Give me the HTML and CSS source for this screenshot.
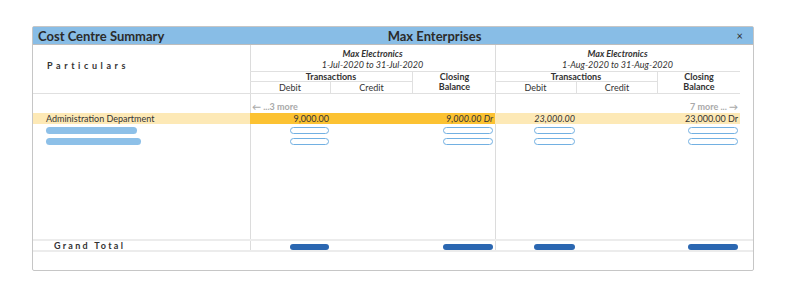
FILE: index.html
```html
<!DOCTYPE html>
<html>
  <head>
    <title>Cost Centre Summary</title>
    <link rel="stylesheet" href="styles.css">
  </head>
  <body>
    <div class="window">
      <div class="titlebar">
        <span class="title-left">Cost Centre Summary</span>
        <span class="title-center">Max Enterprises</span>
        <span class="close">×</span>
      </div>

      <div class="table">
        <div class="head">
          <div class="particulars">Particulars</div>

          <div class="company g1">
            <b>Max Electronics</b>
            <span>1-Jul-2020 to 31-Jul-2020</span>
          </div>
          <div class="trans t1">Transactions</div>
          <div class="closing k1">Closing<br>Balance</div>
          <div class="sub s1 debit">Debit</div>
          <div class="sub s2">Credit</div>

          <div class="company g2">
            <b>Max Electronics</b>
            <span>1-Aug-2020 to 31-Aug-2020</span>
          </div>
          <div class="trans t2">Transactions</div>
          <div class="closing k2">Closing<br>Balance</div>
          <div class="sub s3 debit">Debit</div>
          <div class="sub s4">Credit</div>
        </div>

        <div class="row more-row">
          <div></div>
          <div class="more span3">← ...3 more</div>
          <div class="more span3 right">7 more ... →</div>
        </div>

        <div class="row selected">
          <div class="name">Administration Department</div>
          <div class="focus span3">
            <div class="num">9,000.00</div>
            <div class="num"></div>
            <div class="num italic">9,000.00 Dr</div>
          </div>
          <div class="num italic">23,000.00</div>
          <div class="num"></div>
          <div class="num">23,000.00 Dr</div>
        </div>

        <div class="row pill-row">
          <div class="name"><i class="bar" style="width: 91px"></i></div>
          <div class="num"><i class="ghost" style="width: 39px"></i></div>
          <div class="num"></div>
          <div class="num"><i class="ghost"></i></div>
          <div class="num"><i class="ghost" style="width: 41px"></i></div>
          <div class="num"></div>
          <div class="num"><i class="ghost"></i></div>
        </div>

        <div class="row pill-row">
          <div class="name"><i class="bar" style="width: 95px"></i></div>
          <div class="num"><i class="ghost" style="width: 39px"></i></div>
          <div class="num"></div>
          <div class="num"><i class="ghost"></i></div>
          <div class="num"><i class="ghost" style="width: 41px"></i></div>
          <div class="num"></div>
          <div class="num"><i class="ghost"></i></div>
        </div>

        <div class="filler"></div>

        <div class="row total">
          <div class="total-label">Grand Total</div>
          <div class="num"><i class="solid" style="width: 39px"></i></div>
          <div class="num"></div>
          <div class="num"><i class="solid"></i></div>
          <div class="num"><i class="solid" style="width: 41px"></i></div>
          <div class="num"></div>
          <div class="num"><i class="solid"></i></div>
        </div>
      </div>
    </div>
  </body>
</html>
```

FILE: styles.css
```css
* {
  box-sizing: border-box;
  margin: 0;
  padding: 0;
}

body {
  background: #fff;
  font-family: "Lato", "Noto Sans", sans-serif;
  font-size: 9px;
  color: #333;
  padding: 26px 0 0 32px;
}

.window {
  width: 722px;
  height: 245px;
  border: 1px solid #c6c6c6;
  border-radius: 2px;
  display: flex;
  flex-direction: column;
}

.titlebar {
  height: 18px;
  background: #88bde6;
  border-bottom: 1px solid #bdbdbd;
  display: grid;
  grid-template-columns: 1fr auto 1fr;
  align-items: center;
  padding: 0 10px 0 5px;
  font-weight: bold;
  color: #2b2b2b;
}

.title-left,
.title-center {
  font-size: 13px;
}

.title-center {
  margin-left: 88px;
}

.close {
  justify-self: end;
  font-size: 11px;
  font-weight: normal;
}

.table {
  flex: 1;
  display: flex;
  flex-direction: column;
  background-image: linear-gradient(#dcdcdc, #dcdcdc), linear-gradient(#dcdcdc, #dcdcdc);
  background-size: 1px 206px;
  background-position: 217px 0, 462px 0;
  background-repeat: no-repeat;
}

.head,
.row {
  display: grid;
  grid-template-columns: 217px 81px 82px 82px 82px 81px 82px;
}

.head {
  grid-template-rows: 27px 10px 11px;
  border-bottom: 1px solid #e0e0e0;
  margin-right: 13px;
}

.particulars {
  grid-row: 1 / 4;
  padding: 15px 0 0 14px;
  font-weight: bold;
  letter-spacing: 3.6px;
}

.company {
  grid-row: 1;
  display: flex;
  flex-direction: column;
  align-items: center;
  justify-content: flex-end;
  padding-bottom: 1px;
  border-bottom: 1px solid #e0e0e0;
  font-style: italic;
  line-height: 11px;
}

.g1 { grid-column: 2 / 5; }
.g2 { grid-column: 5 / 8; }

.trans {
  grid-row: 2;
  text-align: center;
  font-weight: bold;
  border-bottom: 1px solid #e0e0e0;
  line-height: 9px;
}

.t1 { grid-column: 2 / 4; border-right: 1px solid #e0e0e0; }
.t2 { grid-column: 5 / 7; border-right: 1px solid #e0e0e0; }

.closing {
  grid-row: 2 / 4;
  text-align: center;
  font-weight: bold;
  line-height: 10px;
}

.k1 { grid-column: 4; margin-left: 1px; }
.k2 { grid-column: 7; }

.sub {
  grid-row: 3;
  text-align: center;
  line-height: 11px;
}

.s1 { grid-column: 2; border-right: 1px solid #e0e0e0; }
.s2 { grid-column: 3; border-right: 1px solid #e0e0e0; }
.s3 { grid-column: 5; border-right: 1px solid #e0e0e0; }
.s4 { grid-column: 6; border-right: 1px solid #e0e0e0; }

.span3 {
  grid-column: span 3;
}

.more-row {
  height: 19px;
  margin-right: 13px;
  align-items: end;
}

.more {
  color: #a9a9a9;
  font-weight: bold;
  padding: 0 2px 1px 2px;
}

.right {
  text-align: right;
}

.row {
  line-height: 11px;
}

.selected {
  background: #fde9b6;
  margin-right: 13px;
}

.focus {
  background: #fcc232;
  display: grid;
  grid-template-columns: 81px 82px 82px;
}

.name {
  padding-left: 13px;
}

.num {
  text-align: right;
  padding-right: 2px;
}

.italic {
  font-style: italic;
}

.pill-row {
  height: 11px;
  margin-right: 13px;
}

.pill-row + .pill-row {
  height: 10px;
}

i.bar,
i.ghost,
i.solid {
  display: inline-block;
  height: 7px;
  border-radius: 4px;
  vertical-align: middle;
}

i.bar {
  background: #8dc0e8;
}

i.ghost {
  width: 50px;
  border: 1px solid #72b0e2;
}

i.solid {
  width: 50px;
  height: 6px;
  background: #2b67b1;
}

.filler {
  height: 94px;
}

.total {
  height: 13px;
  border-top: 2px solid #ececec;
  border-bottom: 2px solid #ececec;
  line-height: 9px;
  align-items: center;
}

.total-label {
  padding-left: 21px;
  font-weight: bold;
  letter-spacing: 2.3px;
}
```
